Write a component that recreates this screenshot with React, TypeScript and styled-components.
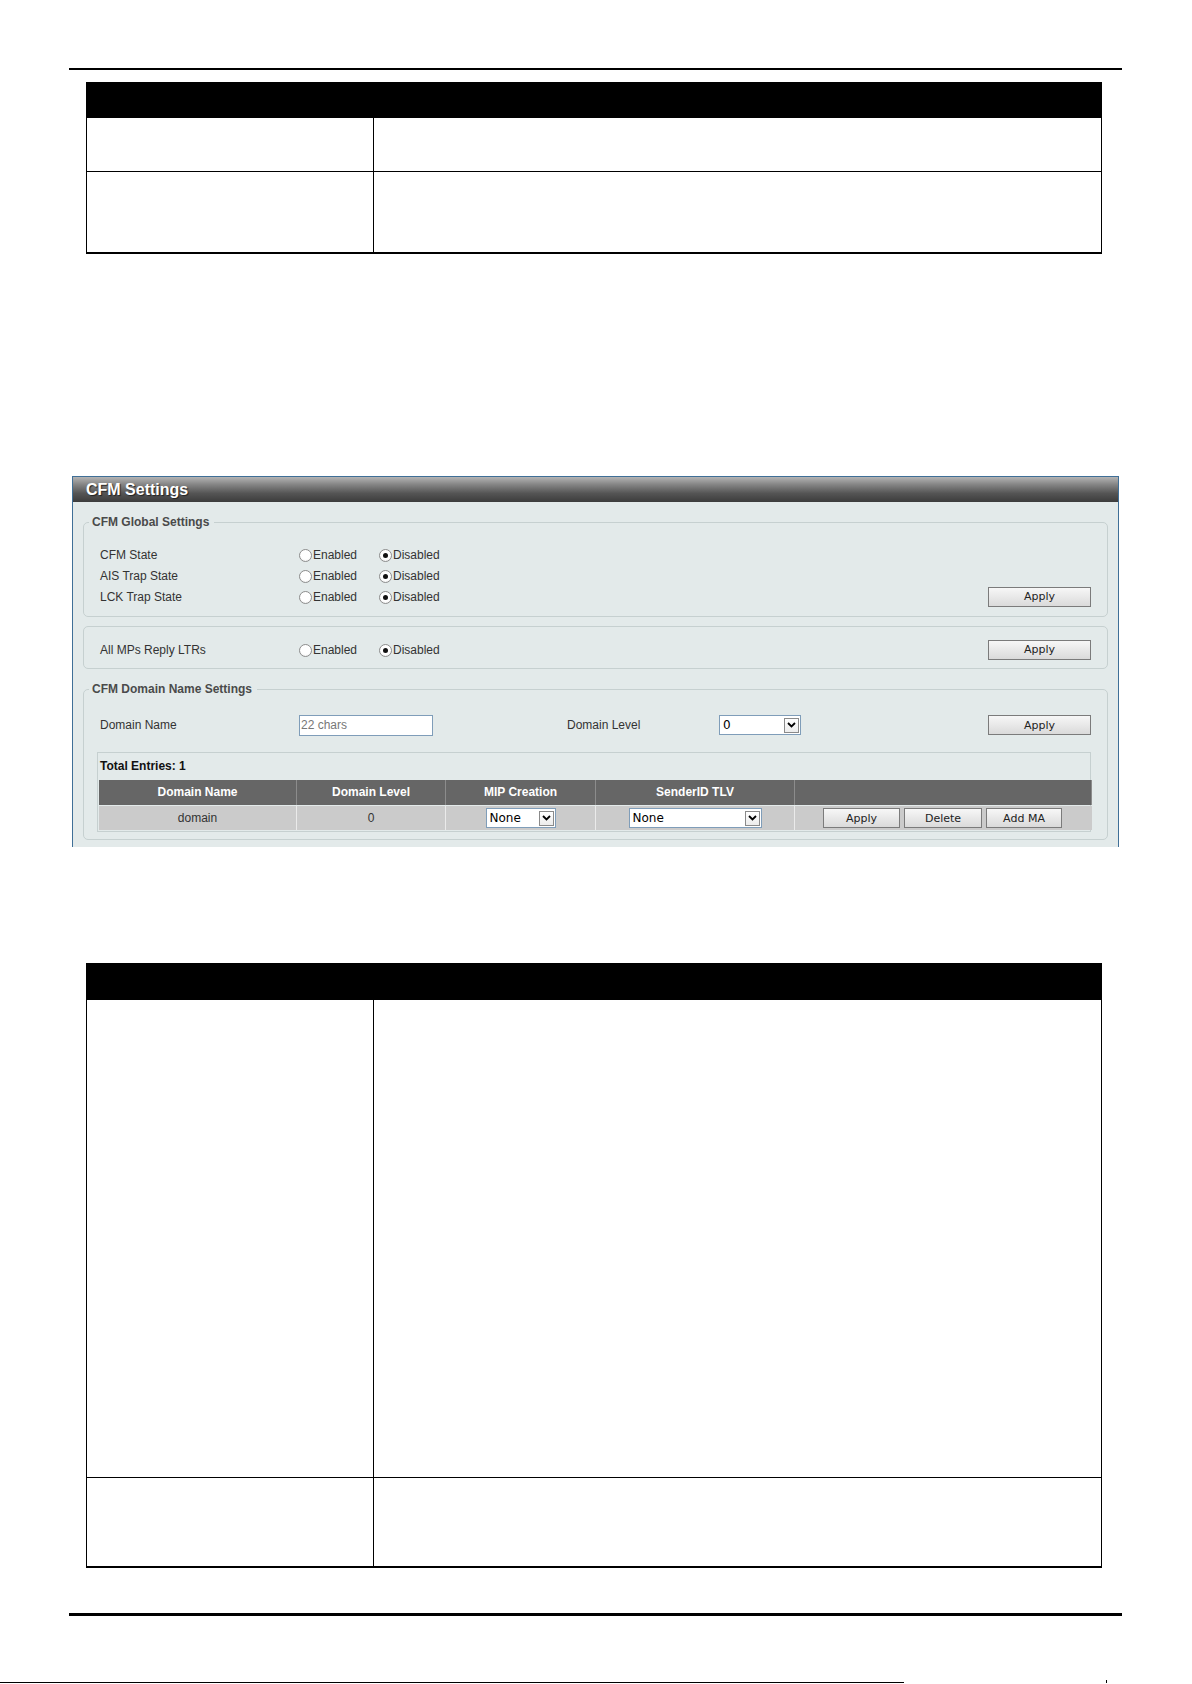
import React from 'react';
import styled, { createGlobalStyle } from 'styled-components';

const GlobalStyle = createGlobalStyle`
  html, body {
    margin: 0;
    padding: 0;
    background: #fff;
  }
  body {
    font-family: 'Liberation Sans', Arial, sans-serif;
  }
`;

const Page = styled.div`
  width: 1192px;
  height: 1684px;
  padding-top: 68px;
  box-sizing: border-box;
  overflow: hidden;
`;

const Rule = styled.div<{ $thick: number; $top: number }>`
  margin: ${p => p.$top}px 0 0 69px;
  width: 1053px;
  height: ${p => p.$thick}px;
  background: #000;
`;

/* 문서 표 (검은 머리줄 + 2열) */
const DocTable = styled.div<{ $top: number }>`
  margin: ${p => p.$top}px 0 0 86px;
  width: 1016px;
  border-left: 1px solid #000;
  border-right: 1px solid #000;
  border-bottom: 2px solid #000;
  box-sizing: border-box;
`;

const DocHead = styled.div<{ $h: number }>`
  height: ${p => p.$h}px;
  background: #000;
  margin: 0 -1px;
`;

const DocRow = styled.div<{ $h: number; $first?: boolean }>`
  display: grid;
  grid-template-columns: 287px 1fr;
  height: ${p => p.$h}px;
  border-top: ${p => (p.$first ? 'none' : '1px solid #000')};
  box-sizing: border-box;
`;

const DocCell = styled.div`
  &:first-child {
    border-right: 1px solid #000;
  }
`;

/* 설정 패널 */
const Panel = styled.div`
  margin: 222px 0 0 72px;
  width: 1047px;
  border: 1px solid #3f6f97;
  border-bottom: none;
  box-sizing: border-box;
  background: #e3eaea;
`;

const TitleBar = styled.div`
  height: 25px;
  padding-left: 13px;
  background: linear-gradient(to bottom, #b4b4b4 0%, #858585 30%, #555 65%, #3c3c3c 100%);
  color: #fff;
  font-weight: bold;
  font-size: 16px;
  line-height: 25px;
  text-shadow: 1px 1px 1px #222;
`;

const PanelBody = styled.div`
  padding: 13px 10px 7px 10px;
`;

const Fieldset = styled.fieldset<{ $gap: number; $pt: number; $pb: number }>`
  margin: ${p => p.$gap}px 0 0 0;
  padding: ${p => p.$pt}px 16px ${p => p.$pb}px 13px;
  border: 1px solid #c6d0d0;
  border-radius: 5px;
  min-width: 0;
  &:first-child {
    margin-top: 0;
  }
`;

const Legend = styled.legend`
  margin-left: -8px;
  padding: 0 5px 0 3px;
  font-size: 12px;
  line-height: 14px;
  font-weight: bold;
  color: #4a4a4a;
`;

const FormRow = styled.div<{ $h?: number }>`
  display: flex;
  align-items: center;
  height: ${p => p.$h ?? 21}px;
  font-size: 12px;
  color: #333;
`;

const Label = styled.span<{ $w: number; $ml?: number }>`
  width: ${p => p.$w}px;
  margin-left: ${p => p.$ml ?? 0}px;
  padding-left: 3px;
  box-sizing: border-box;
  flex-shrink: 0;
`;

const RadioOption = styled.label<{ $w?: number }>`
  display: inline-flex;
  align-items: center;
  width: ${p => (p.$w ? `${p.$w}px` : 'auto')};
  font-size: 12px;
  color: #333;
`;

const RadioDot = styled.span<{ $on?: boolean }>`
  position: relative;
  width: 11px;
  height: 11px;
  margin: 2px 1px 0 0;
  border: 1px solid #8d8d8d;
  border-radius: 50%;
  background: radial-gradient(circle at 50% 40%, #fff 55%, #e6e6e6 100%);
  &::after {
    content: '';
    display: ${p => (p.$on ? 'block' : 'none')};
    position: absolute;
    left: 3px;
    top: 3px;
    width: 5px;
    height: 5px;
    border-radius: 50%;
    background: #111;
  }
`;

const Button = styled.button<{ $w: number; $ml?: string }>`
  width: ${p => p.$w}px;
  height: 20px;
  margin-left: ${p => p.$ml ?? '0'};
  padding: 0;
  border: 1px solid #7b7b7b;
  background: linear-gradient(to bottom, #f7f7f7, #dadada);
  font-family: 'DejaVu Sans', Tahoma, sans-serif;
  font-size: 11px;
  color: #222;
  flex-shrink: 0;
`;

const TextBox = styled.div<{ $w: number }>`
  width: ${p => p.$w}px;
  height: 21px;
  border: 1px solid #7f9db9;
  background: #fff;
  box-sizing: border-box;
  font-size: 12px;
  line-height: 19px;
  color: #777;
  padding-left: 1px;
  flex-shrink: 0;
`;

const Select = styled.div<{ $w: number }>`
  display: flex;
  align-items: center;
  justify-content: space-between;
  width: ${p => p.$w}px;
  height: 20px;
  border: 1px solid #7f9db9;
  background: #fff;
  box-sizing: border-box;
  padding: 0 1px 0 3px;
  font-family: 'DejaVu Sans', Tahoma, sans-serif;
  font-size: 12px;
  color: #000;
  flex-shrink: 0;
`;

const ArrowBox = styled.span`
  display: flex;
  align-items: center;
  justify-content: center;
  width: 15px;
  height: 15px;
  border: 1px solid #8a8a8a;
  box-sizing: border-box;
  background: linear-gradient(to bottom, #fff, #ececec);
`;

const Chevron = () => (
  <svg width="9" height="6" viewBox="0 0 9 6">
    <path d="M1 1 L4.5 4.5 L8 1" stroke="#000" strokeWidth="1.8" fill="none" />
  </svg>
);

const Dropdown: React.FC<{ w: number; value: string }> = ({ w, value }) => (
  <Select $w={w}>
    <span>{value}</span>
    <ArrowBox>
      <Chevron />
    </ArrowBox>
  </Select>
);

/* 도메인 목록 */
const EntryBox = styled.div`
  margin-top: 16px;
  border: 1px solid #c6d0d0;
  padding: 0 0 1px 1px;
`;

const EntryCount = styled.div`
  height: 27px;
  line-height: 27px;
  padding-left: 1px;
  font-size: 12px;
  font-weight: bold;
  color: #111;
`;

const Grid = styled.div`
  display: grid;
  grid-template-columns: 198px 149px 150px 199px 297px;
`;

const HeadCell = styled.div`
  height: 25px;
  line-height: 25px;
  background: #666;
  color: #fff;
  font-size: 12px;
  font-weight: bold;
  text-align: center;
  border-right: 1px solid #8c8c8c;
  &:last-child {
    border-right: none;
  }
`;

const BodyCell = styled.div<{ $align?: string }>`
  display: flex;
  align-items: center;
  justify-content: ${p => p.$align ?? 'center'};
  height: 24px;
  margin-top: 1px;
  background: #cbcbcb;
  font-size: 12px;
  color: #333;
  border-right: 1px solid #eaeaea;
  gap: 4px;
  &:last-child {
    border-right: none;
  }
`;

const ButtonGroup = styled.div`
  display: flex;
  gap: 4px;
  margin-left: 28px;
  margin-right: auto;
`;

const Footer = styled.div`
  display: flex;
  align-items: flex-end;
  margin-top: 64px;
  height: 3px;
`;

const FooterLine = styled.div`
  width: 904px;
  height: 1px;
  background: #000;
`;

const FooterTick = styled.div`
  margin-left: 202px;
  width: 1px;
  height: 3px;
  background: #000;
`;

const Radios: React.FC<{ on: 'en' | 'dis' }> = ({ on }) => (
  <>
    <RadioOption $w={80}>
      <RadioDot $on={on === 'en'} />
      Enabled
    </RadioOption>
    <RadioOption>
      <RadioDot $on={on === 'dis'} />
      Disabled
    </RadioOption>
  </>
);

const App: React.FC = () => (
  <Page>
    <GlobalStyle />
    <Rule $thick={2} $top={0} />

    <DocTable $top={12}>
      <DocHead $h={36} />
      <DocRow $h={53} $first>
        <DocCell />
        <DocCell />
      </DocRow>
      <DocRow $h={81}>
        <DocCell />
        <DocCell />
      </DocRow>
    </DocTable>

    <Panel>
      <TitleBar>CFM Settings</TitleBar>
      <PanelBody>
        <Fieldset $gap={0} $pt={15} $pb={9}>
          <Legend>CFM Global Settings</Legend>
          <FormRow>
            <Label $w={202}>CFM State</Label>
            <Radios on="dis" />
          </FormRow>
          <FormRow>
            <Label $w={202}>AIS Trap State</Label>
            <Radios on="dis" />
          </FormRow>
          <FormRow>
            <Label $w={202}>LCK Trap State</Label>
            <Radios on="dis" />
            <Button $w={103} $ml="auto">Apply</Button>
          </FormRow>
        </Fieldset>

        <Fieldset $gap={9} $pt={12} $pb={8}>
          <FormRow>
            <Label $w={202}>All MPs Reply LTRs</Label>
            <Radios on="dis" />
            <Button $w={103} $ml="auto">Apply</Button>
          </FormRow>
        </Fieldset>

        <Fieldset $gap={13} $pt={18} $pb={7}>
          <Legend>CFM Domain Name Settings</Legend>
          <FormRow $h={22}>
            <Label $w={202}>Domain Name</Label>
            <TextBox $w={134}>22 chars</TextBox>
            <Label $w={155} $ml={131}>Domain Level</Label>
            <Dropdown w={82} value="0" />
            <Button $w={103} $ml="auto">Apply</Button>
          </FormRow>

          <EntryBox>
            <EntryCount>Total Entries: 1</EntryCount>
            <Grid>
              <HeadCell>Domain Name</HeadCell>
              <HeadCell>Domain Level</HeadCell>
              <HeadCell>MIP Creation</HeadCell>
              <HeadCell>SenderID TLV</HeadCell>
              <HeadCell />
              <BodyCell>domain</BodyCell>
              <BodyCell>0</BodyCell>
              <BodyCell>
                <Dropdown w={70} value="None" />
              </BodyCell>
              <BodyCell>
                <Dropdown w={133} value="None" />
              </BodyCell>
              <BodyCell>
                <ButtonGroup>
                  <Button $w={77}>Apply</Button>
                  <Button $w={78}>Delete</Button>
                  <Button $w={76}>Add MA</Button>
                </ButtonGroup>
              </BodyCell>
            </Grid>
          </EntryBox>
        </Fieldset>
      </PanelBody>
    </Panel>

    <DocTable $top={116}>
      <DocHead $h={37} />
      <DocRow $h={477} $first>
        <DocCell />
        <DocCell />
      </DocRow>
      <DocRow $h={89}>
        <DocCell />
        <DocCell />
      </DocRow>
    </DocTable>

    <Rule $thick={3} $top={45} />

    <Footer>
      <FooterLine />
      <FooterTick />
    </Footer>
  </Page>
);

export default App;
